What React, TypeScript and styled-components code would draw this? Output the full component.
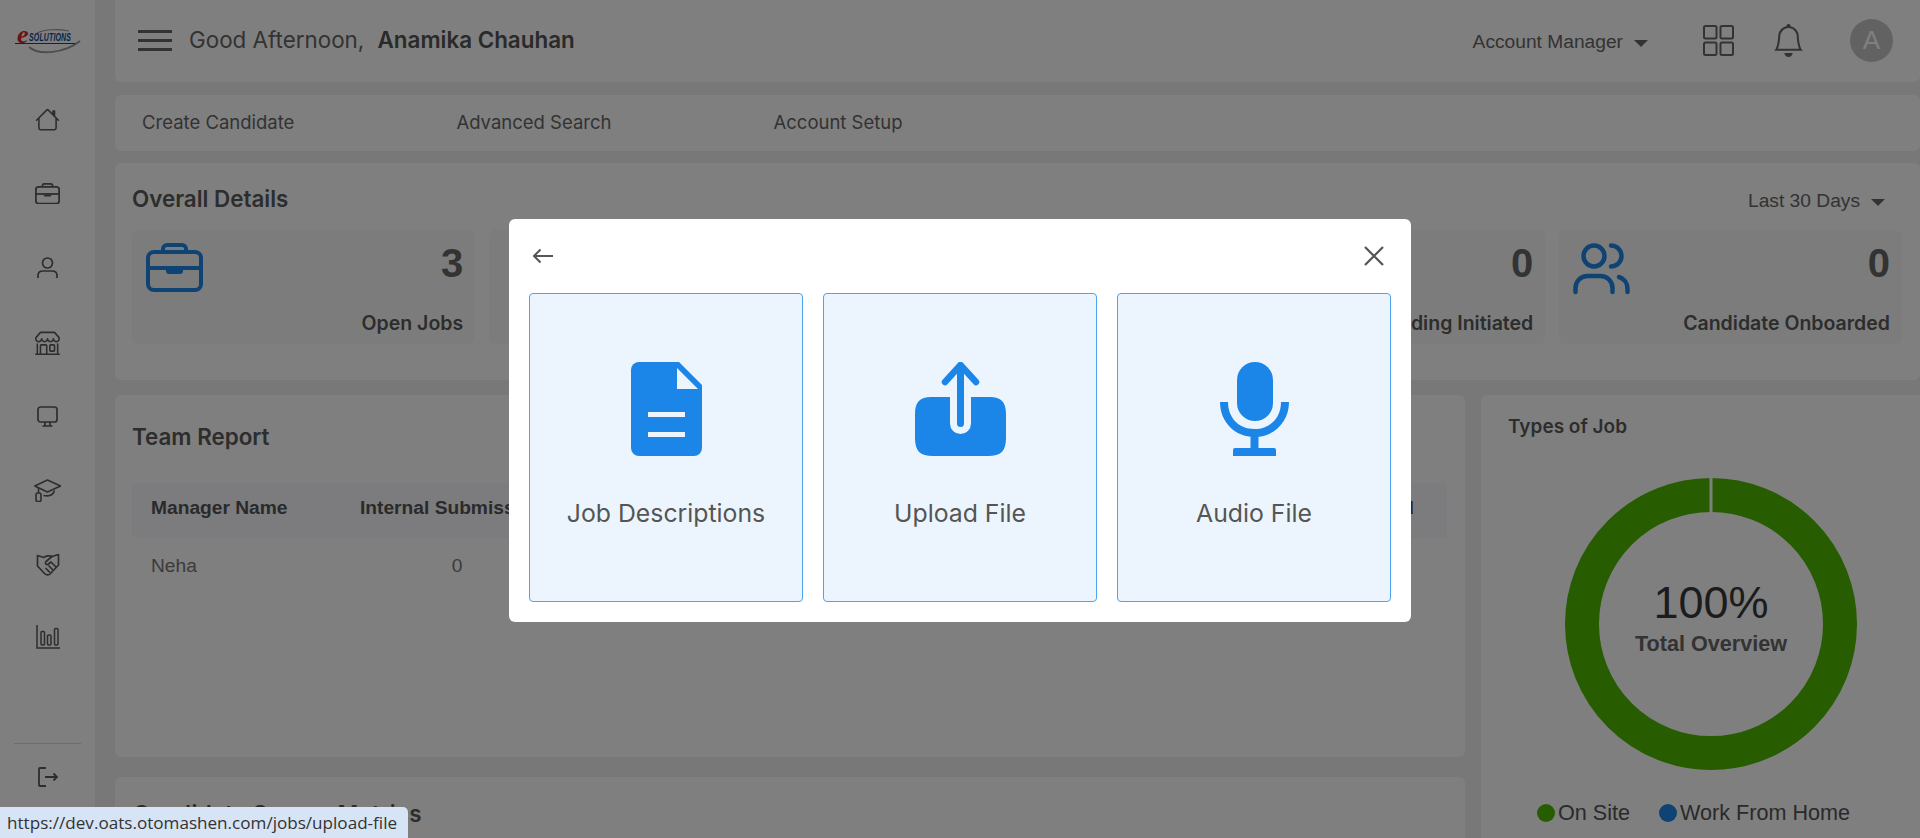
import React from 'react'
import styled, { createGlobalStyle } from 'styled-components'
import { BsHouse, BsShop, BsBell } from 'react-icons/bs'

const Global = createGlobalStyle`
    html, body {
        margin: 0;
        padding: 0;
        height: 100%;
        overflow: hidden;
        background: #f0f0f0;
    }
    * {
        box-sizing: border-box;
    }
`

const grotesk = `Inter, "Liberation Sans", sans-serif`
const arial = `"Liberation Sans", Arial, sans-serif`
const blue = '#1c86e8'
const ink = '#5a5a5a'
const tileBg = '#ecf5fe'

const Page = styled.div`
    display: flex;
    width: 1920px;
    height: 838px;
    overflow: hidden;
    background: #f0f0f0;
    font-family: ${grotesk};
    color: ${ink};
`
const Sidebar = styled.aside`
    width: 95px;
    height: 100%;
    flex-shrink: 0;
    background: #fff;
    display: flex;
    flex-direction: column;
    align-items: center;
    padding-top: 27px;
`
const Logo = styled.svg`
    width: 66px;
    height: 26px;
    display: block;
    overflow: visible;
`
const NavList = styled.nav`
    margin-top: 29px;
    display: flex;
    flex-direction: column;
`
const NavItem = styled.div`
    height: 74.3px;
    display: flex;
    align-items: center;
    justify-content: center;
    color: ${ink};
`
const LogoutItem = styled(NavItem)`
    height: 20px;
`
const SideFooter = styled.div`
    margin-top: auto;
    width: 67px;
    padding-bottom: 51px;
    display: flex;
    flex-direction: column;
    align-items: center;
    gap: 23px;
    &::before {
        content: '';
        display: block;
        width: 100%;
        height: 1px;
        background: #d8d8d8;
    }
`
const Main = styled.main`
    flex: 1;
    min-width: 0;
    padding-left: 20px;
    display: flex;
    flex-direction: column;
`
const Panel = styled.section`
    background: #fff;
    border-radius: 6px;
    flex-shrink: 0;
`
const TopBar = styled(Panel)`
    height: 82px;
    display: flex;
    align-items: center;
    padding: 0 27px 2px 23px;
    border-radius: 0 0 6px 6px;
`
const Burger = styled.div`
    width: 34px;
    display: flex;
    flex-direction: column;
    gap: 6px;
    margin-right: 17px;
    span {
        height: 3px;
        background: #666;
    }
`
const Greeting = styled.div`
    font-size: 22.4px;
    color: #666;
    flex: 1;
    margin-bottom: 1px;
    b {
        font-weight: 600;
        color: #555;
        margin-left: 7px;
    }
`
const Dropdown = styled.div`
    display: flex;
    align-items: center;
    margin-top: 3px;
    font-family: ${arial};
    font-size: 19.2px;
    color: #666;
`
const Caret = styled.i`
    width: 0;
    height: 0;
    margin-left: 11px;
    margin-top: 3px;
    border-left: 7px solid transparent;
    border-right: 7px solid transparent;
    border-top: 7px solid #666;
`
const TopIcons = styled.div`
    display: flex;
    align-items: center;
    margin-left: 55px;
    color: #666;
`
const BellWrap = styled.div`
    display: flex;
    margin-left: 38px;
    margin-right: 45px;
`
const Avatar = styled.div`
    width: 43px;
    height: 43px;
    border-radius: 50%;
    background: #c4c4c4;
    color: #fff;
    font-family: ${arial};
    font-size: 26px;
    display: flex;
    align-items: center;
    justify-content: center;
`
const Tabs = styled(Panel)`
    height: 56px;
    margin-top: 13px;
    display: flex;
    align-items: center;
    gap: 162px;
    padding: 0 0 2px 27px;
    font-size: 18.5px;
    color: #666;
`
const Overall = styled(Panel)`
    height: 217px;
    margin-top: 12px;
    padding: 24px 18px 0 17px;
`
const Title = styled.h2`
    margin: 0;
    font-size: 22.4px;
    line-height: 27px;
    font-weight: 600;
    color: #5a5a5a;
`
const OverallHead = styled.div`
    display: flex;
    justify-content: space-between;
    align-items: center;
    height: 24px;
    padding-right: 17px;
    ${Title} {
        margin-bottom: 2px;
    }
`
const StatRow = styled.div`
    margin-top: 19px;
    display: grid;
    grid-template-columns: repeat(5, 343.2px);
    gap: 13.5px;
`
const StatCard = styled.div`
    height: 114px;
    background: #f9f9f9;
    border-radius: 6px;
    padding: 13px 12px 0 14px;
    position: relative;
`
const StatTop = styled.div`
    display: flex;
    justify-content: space-between;
    align-items: flex-start;
`
const StatNumber = styled.div`
    font-family: ${arial};
    font-weight: 700;
    font-size: 40px;
    line-height: 40px;
    margin-left: auto;
    color: #666;
`
const StatLabel = styled.div`
    position: absolute;
    right: 12px;
    bottom: 9px;
    font-size: 19.5px;
    font-weight: 600;
    white-space: nowrap;
    color: #5a5a5a;
`
const Columns = styled.div`
    margin-top: 15px;
    display: grid;
    grid-template-columns: 1350px 439px;
    gap: 16px;
    flex-shrink: 0;
`
const LeftColumn = styled.div`
    display: flex;
    flex-direction: column;
    gap: 20px;
`
const TeamCard = styled(Panel)`
    height: 362px;
    padding: 28px 18px 0 17px;
`
const ReportTable = styled.div`
    margin-top: 33px;
    font-family: ${arial};
    font-size: 19.2px;
`
const TableRow = styled.div<{ $head?: boolean }>`
    display: grid;
    grid-template-columns: 209px 194px repeat(3, 1fr) 170px;
    align-items: center;
    height: ${p => (p.$head ? 55 : 56)}px;
    padding: 0 33px ${p => (p.$head ? 6 : 0)}px 19px;
    white-space: nowrap;
    border-radius: 4px;
    background: ${p => (p.$head ? '#f8f9fd' : 'transparent')};
    font-weight: ${p => (p.$head ? 700 : 400)};
    color: ${p => (p.$head ? '#555' : '#777')};
`
const NumCell = styled.span`
    text-align: center;
`
const EndCell = styled.span`
    text-align: right;
`
const SourceCard = styled(Panel)`
    height: 120px;
    padding: 23px 18px 0 18px;
`
const SourceTitle = styled(Title)`
    letter-spacing: 0.35px;
`
const TypesCard = styled(Panel)`
    height: 500px;
    padding: 20px 0 0 27px;
    border-radius: 6px 0 0 6px;
`
const TypesTitle = styled.h3`
    margin: 0;
    font-size: 19px;
    line-height: 24px;
    font-weight: 600;
    color: #5a5a5a;
`
const DonutWrap = styled.div`
    position: relative;
    width: 292px;
    height: 292px;
    margin: 39px 0 0 57px;
`
const DonutCenter = styled.div`
    position: absolute;
    inset: 0;
    padding-bottom: 15px;
    display: flex;
    flex-direction: column;
    align-items: center;
    justify-content: center;
    font-family: ${arial};
`
const Percent = styled.div`
    font-size: 45px;
    line-height: 50px;
    color: #383838;
`
const CenterLabel = styled.div`
    margin-top: 4px;
    font-size: 21.6px;
    line-height: 24px;
    font-weight: 700;
    color: #666;
`
const Legend = styled.div`
    margin: 31px 0 0 29px;
    display: flex;
    gap: 29px;
    font-family: ${arial};
    font-size: 21.6px;
    line-height: 24px;
    color: #555;
`
const LegendItem = styled.div`
    display: flex;
    align-items: center;
    gap: 3px;
`
const Dot = styled.i<{ $color: string }>`
    width: 18px;
    height: 18px;
    border-radius: 50%;
    background: ${p => p.$color};
`
const Overlay = styled.div`
    position: fixed;
    inset: 0;
    background: rgba(0, 0, 0, 0.5);
    display: flex;
    align-items: center;
    justify-content: center;
    padding-top: 3px;
`
const Modal = styled.div`
    width: 902px;
    height: 403px;
    background: #fff;
    border-radius: 6px;
    padding: 0 20px 20px;
    display: flex;
    flex-direction: column;
`
const ModalHead = styled.div`
    height: 74px;
    flex-shrink: 0;
    display: flex;
    align-items: center;
    justify-content: space-between;
    padding: 0 7px 0 3px;
`
const Tiles = styled.div`
    flex: 1;
    display: grid;
    grid-template-columns: repeat(3, 274px);
    gap: 20px;
`
const Tile = styled.button`
    background: ${tileBg};
    border: 1px solid #4ea4f0;
    border-radius: 4px;
    padding: 68px 0 0;
    display: flex;
    flex-direction: column;
    align-items: center;
    font-family: ${grotesk};
    font-size: 24.8px;
    line-height: 30px;
    color: #555;
`
const TileIcon = styled.svg`
    height: 94px;
    display: block;
    margin-bottom: 42px;
`
const StatusTip = styled.div`
    position: fixed;
    left: 0;
    bottom: 0;
    height: 31px;
    width: 408px;
    padding-left: 7px;
    display: flex;
    align-items: center;
    background: #d6e4f5;
    border-top-right-radius: 5px;
    font-family: "Open Sans", "Noto Sans", sans-serif;
    font-size: 17.1px;
    color: #333;
    white-space: nowrap;
`
const ChartSvg = styled.svg`
    margin-bottom: 5px;
`

const Briefcase = ({ color, width, stroke }: { color: string; width: number; stroke: number }) => (
    <svg width={width} viewBox="0 0 57 49" fill="none" stroke={color} strokeWidth={stroke} style={{ display: 'block' }}>
        <rect x="2" y="9" width="53" height="38" rx="6" />
        <path d="M17 9V6a4 4 0 0 1 4-4h15a4 4 0 0 1 4 4v3" />
        <path d="M2 25h53" />
        <path d="M20 26h17v2a3 3 0 0 1-3 3H23a3 3 0 0 1-3-3z" fill={color} stroke="none" />
    </svg>
)

const Users = () => (
    <svg width="57" height="52" viewBox="0 0 57 52" fill="none" stroke={blue} strokeWidth="4.5" strokeLinecap="round" style={{ display: 'block' }}>
        <circle cx="21" cy="13" r="10.5" />
        <path d="M38 2.5a10.5 10.5 0 0 1 0 21" />
        <path d="M2.5 49v-4a12 12 0 0 1 12-12h13a12 12 0 0 1 12 12v4" />
        <path d="M46 34a12 12 0 0 1 8.5 11.5V49" />
    </svg>
)

const PersonIcon = () => (
    <svg width="21" height="22" viewBox="0 0 21 22" fill="none" stroke="currentColor" strokeWidth="1.7">
        <circle cx="10.5" cy="6" r="5" />
        <path d="M1 21v-2.5c0-3 2-4.5 5-4.5h9c3 0 5 1.500 5 4.500V21" />
    </svg>
)

const MonitorIcon = () => (
    <svg width="21" height="21" viewBox="0 0 21 21" fill="none" stroke="currentColor" strokeWidth="1.7">
        <rect x="1" y="1" width="19" height="15" rx="2.5" />
        <path d="M8 16v3.500M13 16v3.500M5.500 20h10" />
    </svg>
)

const CapIcon = () => (
    <svg width="27" height="23" viewBox="0 0 27 23" fill="none" stroke="currentColor" strokeWidth="1.6" strokeLinejoin="round">
        <path d="M13.500 1 26.500 7 13.500 13 .8 7Z" />
        <path d="M4.500 9V14" />
        <rect x="2" y="14" width="5" height="8.500" rx="1.800" />
        <path d="M9.500 16.500c5 1 9.500.5 11-5" />
    </svg>
)

const HandshakeIcon = () => (
    <svg width="24" height="23" viewBox="0 0 24 23" fill="none" stroke="currentColor" strokeWidth="1.7" strokeLinejoin="round" strokeLinecap="round">
        <path d="M1.500 2.500 8 4.500C10 2.500 14 2.500 16 3.500L22.500 1.500V12L14 21C12.500 22.500 10 22 8.500 20.500L1.500 13Z" />
        <path d="M16 3.500 10 8.500C8.500 10.500 10.500 12.500 12.500 11L15 9 20 14" />
        <path d="M16.500 16.500 13 13M13.500 19 10 15.500" />
    </svg>
)

const ChartIcon = () => (
    <ChartSvg width="24" height="24" viewBox="0 0 24 24" fill="none" stroke="currentColor" strokeWidth="1.5">
        <path d="M1 0v23h23" />
        <rect x="5" y="6.500" width="3.500" height="13.500" rx="1" />
        <rect x="11.500" y="10" width="3.500" height="10" rx="1" />
        <rect x="18.500" y="3.500" width="3.500" height="16.500" rx="1" />
    </ChartSvg>
)

const LogoutIcon = () => (
    <svg width="20" height="20" viewBox="0 0 20 20" fill="none" stroke="currentColor" strokeWidth="1.800">
        <path d="M8 1H2a1 1 0 0 0-1 1v16a1 1 0 0 0 1 1h6" />
        <path d="M7 10h12M15.500 6.500 19 10l-3.500 3.500" />
    </svg>
)

const GridIcon = () => (
    <svg width="31" height="31" viewBox="0 0 31 31" fill="none" stroke="currentColor" strokeWidth="2">
        <rect x="1" y="1" width="12.500" height="12.500" rx="1.500" />
        <rect x="17.500" y="1" width="12.500" height="12.500" rx="1.500" />
        <rect x="1" y="17.500" width="12.500" height="12.500" rx="1.500" />
        <rect x="17.500" y="17.500" width="12.500" height="12.500" rx="1.500" />
    </svg>
)

const navIcons = [
    <BsHouse size={25} />,
    <Briefcase color={ink} width={25} stroke={4} />,
    <PersonIcon />,
    <BsShop size={25} />,
    <MonitorIcon />,
    <CapIcon />,
    <HandshakeIcon />,
    <ChartIcon />,
]

const stats = [
    { label: 'Open Jobs', value: 3, icon: <Briefcase color={blue} width={57} stroke={4} /> },
    { label: 'Internal Submission', value: 0, icon: null },
    { label: 'Client Submission', value: 0, icon: null },
    { label: 'Onboarding Initiated', value: 0, icon: null },
    { label: 'Candidate Onboarded', value: 0, icon: <Users /> },
]

const App = () => {
    return <>
        <Global />
        <Page>
            <Sidebar>
                <Logo viewBox="0 0 66 26">
                    <path d="M14 20C24 29 50 26 65 14" fill="none" stroke="#9a9a9a" strokeWidth="2" />
                    <path d="M22 6C30 2 44 2 54 4" fill="none" stroke="#9a9a9a" strokeWidth="1.200" />
                    <text x="2" y="16" fontFamily="Liberation Serif" fontStyle="italic" fontWeight="700" fontSize="26" fill="#d8262c">e</text>
                    <text transform="translate(14 14) scale(1 1.5)" fontFamily="Liberation Sans" fontStyle="italic" fontWeight="700" fontSize="7" letterSpacing="0.15" fill="#0b4a93">SOLUTIONS</text>
                    <path d="M0 16.500h60" stroke="#0b4a93" strokeWidth="1.200" />
                </Logo>
                <NavList>
                    {navIcons.map((icon, i) => <NavItem key={i}>{icon}</NavItem>)}
                </NavList>
                <SideFooter>
                    <LogoutItem><LogoutIcon /></LogoutItem>
                </SideFooter>
            </Sidebar>
            <Main>
                <TopBar>
                    <Burger><span /><span /><span /></Burger>
                    <Greeting>Good Afternoon, <b>Anamika Chauhan</b></Greeting>
                    <Dropdown>Account Manager<Caret /></Dropdown>
                    <TopIcons>
                        <GridIcon />
                        <BellWrap><BsBell size={33} /></BellWrap>
                        <Avatar>A</Avatar>
                    </TopIcons>
                </TopBar>
                <Tabs>
                    <span>Create Candidate</span>
                    <span>Advanced Search</span>
                    <span>Account Setup</span>
                </Tabs>
                <Overall>
                    <OverallHead>
                        <Title>Overall Details</Title>
                        <Dropdown>Last 30 Days<Caret /></Dropdown>
                    </OverallHead>
                    <StatRow>
                        {stats.map(s => <StatCard key={s.label}>
                            <StatTop>
                                {s.icon}
                                <StatNumber>{s.value}</StatNumber>
                            </StatTop>
                            <StatLabel>{s.label}</StatLabel>
                        </StatCard>)}
                    </StatRow>
                </Overall>
                <Columns>
                    <LeftColumn>
                        <TeamCard>
                            <Title>Team Report</Title>
                            <ReportTable>
                                <TableRow $head>
                                    <span>Manager Name</span>
                                    <span>Internal Submission</span>
                                    <span>Client Submission</span>
                                    <span>Interview</span>
                                    <span>Offered</span>
                                    <EndCell>Onboarded</EndCell>
                                </TableRow>
                                <TableRow>
                                    <span>Neha</span>
                                    <NumCell>0</NumCell>
                                    <NumCell>0</NumCell>
                                    <NumCell>0</NumCell>
                                    <NumCell>0</NumCell>
                                    <NumCell>0</NumCell>
                                </TableRow>
                            </ReportTable>
                        </TeamCard>
                        <SourceCard>
                            <SourceTitle>Candidate Source Metrics</SourceTitle>
                        </SourceCard>
                    </LeftColumn>
                    <TypesCard>
                        <TypesTitle>Types of Job</TypesTitle>
                        <DonutWrap>
                            <svg width="292" height="292" viewBox="0 0 292 292">
                                <circle cx="146" cy="146" r="129" fill="none" stroke="#4fb900" strokeWidth="34" />
                                <rect x="144.500" y="0" width="3" height="35" fill="#fff" />
                            </svg>
                            <DonutCenter>
                                <Percent>100%</Percent>
                                <CenterLabel>Total Overview</CenterLabel>
                            </DonutCenter>
                        </DonutWrap>
                        <Legend>
                            <LegendItem><Dot $color="#4fb900" />On Site</LegendItem>
                            <LegendItem><Dot $color={blue} />Work From Home</LegendItem>
                        </Legend>
                    </TypesCard>
                </Columns>
            </Main>
            <Overlay>
                <Modal>
                    <ModalHead>
                        <svg width="21" height="16" viewBox="0 0 21 16" fill="none" stroke="#555" strokeWidth="2">
                            <path d="M21 8H2M8.500 1.500 2 8l6.500 6.500" />
                        </svg>
                        <svg width="20" height="20" viewBox="0 0 20 20" fill="none" stroke="#555" strokeWidth="2.200">
                            <path d="M1 1l18 18M19 1 1 19" />
                        </svg>
                    </ModalHead>
                    <Tiles>
                        <Tile>
                            <TileIcon width="71" viewBox="0 0 71 94">
                                <path d="M8 0H48L71 23V86a8 8 0 0 1-8 8H8a8 8 0 0 1-8-8V8a8 8 0 0 1 8-8Z" fill={blue} />
                                <path d="M46 6 67 27H46Z" fill={tileBg} />
                                <rect x="17" y="50" width="37" height="5" fill={tileBg} />
                                <rect x="17" y="70" width="37" height="5" fill={tileBg} />
                            </TileIcon>
                            Job Descriptions
                        </Tile>
                        <Tile>
                            <TileIcon width="91" viewBox="0 0 91 94">
                                <path d="M35 35H16C5 35 0 40 0 52V76C0 89 5 94 18 94H73C86 94 91 89 91 76V52C91 40 86 35 75 35H56V61.500A10.500 10.500 0 0 1 35 61.500Z" fill={blue} />
                                <path d="M45.500 6V61.500" stroke={blue} strokeWidth="7" strokeLinecap="round" />
                                <path d="M30 20 45.500 3 61 20" stroke={blue} strokeWidth="6.500" strokeLinecap="round" strokeLinejoin="round" fill="none" />
                            </TileIcon>
                            Upload File
                        </Tile>
                        <Tile>
                            <TileIcon width="69" viewBox="0 0 69 94">
                                <rect x="17" y="0" width="36" height="59" rx="18" fill={blue} />
                                <path d="M0 40H8C8 56 19 67 34.500 67C50 67 61 56 61 40H69C69 60 54 75 34.500 75C15 75 0 60 0 40Z" fill={blue} />
                                <rect x="30.500" y="74" width="8" height="13" fill={blue} />
                                <path d="M13 94V88a2 2 0 0 1 2-2H54a2 2 0 0 1 2 2V94Z" fill={blue} />
                            </TileIcon>
                            Audio File
                        </Tile>
                    </Tiles>
                </Modal>
            </Overlay>
            <StatusTip>https://dev.oats.otomashen.com/jobs/upload-file</StatusTip>
        </Page>
    </>
}

export default App
